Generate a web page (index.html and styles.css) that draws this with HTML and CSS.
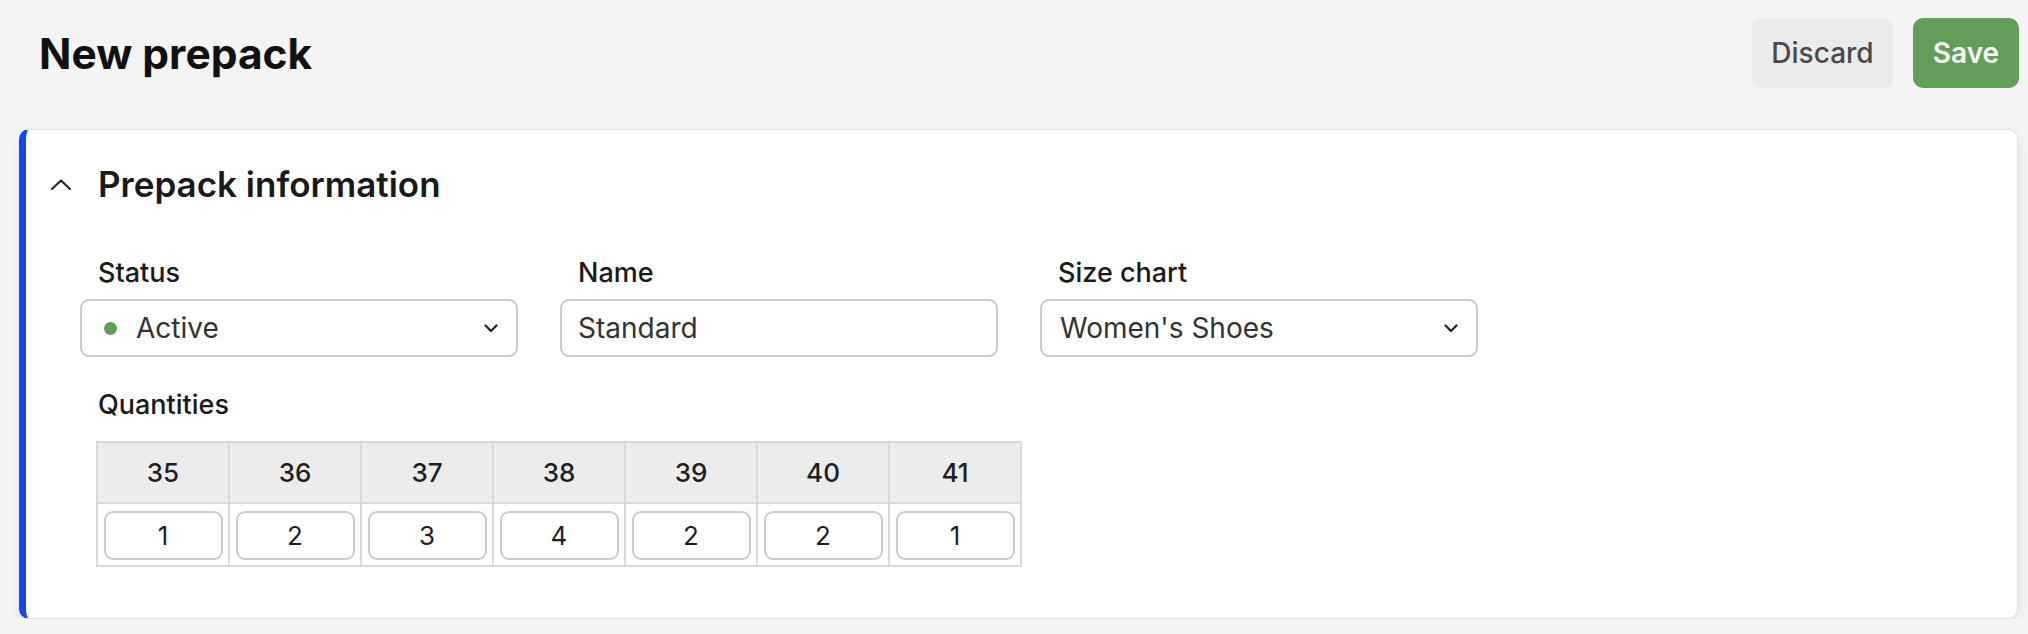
FILE: index.html
```html
<!DOCTYPE html>
<html lang="en">
<head>
  <meta charset="UTF-8">
  <meta name="viewport" content="width=device-width, initial-scale=1.0">
  <title>New prepack</title>
  <link rel="stylesheet" href="styles.css">
</head>
<body>
  <div class="page">
    <div class="topbar">
      <h1>New prepack</h1>
      <div class="actions">
        <button class="btn btn-discard">Discard</button>
        <button class="btn btn-save">Save</button>
      </div>
    </div>

    <div class="card">
      <div class="card-header">
        <svg class="collapse" width="20" height="11" viewBox="0 0 20 11">
          <path d="M1 10 L10 1.5 L19 10" fill="none" stroke="#1f1f1f" stroke-width="2" stroke-linecap="round" stroke-linejoin="round"/>
        </svg>
        <h2>Prepack information</h2>
      </div>

      <div class="card-body">
        <div class="fields">
          <div class="field">
            <label>Status</label>
            <div class="select">
              <span class="dot"></span>
              <span class="select-value">Active</span>
              <svg class="caret" width="14" height="9" viewBox="0 0 14 9">
                <path d="M1.5 1.5 L7 7 L12.5 1.5" fill="none" stroke="#222" stroke-width="2.2" stroke-linecap="round" stroke-linejoin="round"/>
              </svg>
            </div>
          </div>
          <div class="field">
            <label for="prepackName">Name</label>
            <input type="text" id="prepackName" class="text-input" value="Standard">
          </div>
          <div class="field">
            <label>Size chart</label>
            <div class="select">
              <span class="select-value">Women's Shoes</span>
              <svg class="caret" width="14" height="9" viewBox="0 0 14 9">
                <path d="M1.5 1.5 L7 7 L12.5 1.5" fill="none" stroke="#222" stroke-width="2.2" stroke-linecap="round" stroke-linejoin="round"/>
              </svg>
            </div>
          </div>
        </div>

        <div class="quantities">
          <label>Quantities</label>
          <table class="qty-table">
            <tr>
              <th>35</th><th>36</th><th>37</th><th>38</th><th>39</th><th>40</th><th>41</th>
            </tr>
            <tr>
              <td><input type="text" value="1"></td>
              <td><input type="text" value="2"></td>
              <td><input type="text" value="3"></td>
              <td><input type="text" value="4"></td>
              <td><input type="text" value="2"></td>
              <td><input type="text" value="2"></td>
              <td><input type="text" value="1"></td>
            </tr>
          </table>
        </div>
      </div>
    </div>
  </div>
</body>
</html>
```

FILE: styles.css
```css
body {
  margin: 0;
  background-color: #f4f4f4;
  font-family: 'Inter', 'Noto Sans', sans-serif;
  color: #1a1a1a;
}
.page {
  padding: 18px 10px 0 19px;
}
.topbar {
  display: flex;
  justify-content: space-between;
  align-items: center;
  height: 70px;
  padding-left: 20px;
  margin-bottom: 41px;
}
h1 {
  margin: 0;
  font-size: 42.5px;
  font-weight: 700;
  color: #111;
}
.actions {
  display: flex;
  gap: 20px;
  margin-right: -1px;
}
.btn {
  height: 70px;
  border: none;
  border-radius: 10px;
  font-family: inherit;
  font-size: 28px;
  font-weight: 500;
  cursor: pointer;
}
.btn-discard {
  width: 141px;
  background-color: #ebebeb;
  color: #4a4a4a;
}
.btn-save {
  width: 106px;
  background-color: #629d5a;
  color: white;
  font-weight: 600;
}
.card {
  background: white;
  border: 1px solid #e3e3e3;
  border-left: 7px solid #1549ec;
  border-radius: 10px;
  box-shadow: 0 6px 14px rgba(0, 0, 0, 0.07);
  padding: 32px 0 51px 0;
}
.card-header {
  display: flex;
  align-items: center;
  padding-left: 25px;
}
.collapse {
  margin-right: 27px;
}
h2 {
  margin: 0;
  font-size: 35px;
  line-height: 44px;
  font-weight: 600;
  color: #1a1a1a;
}
.card-body {
  padding-left: 54px;
}
.fields {
  display: flex;
  gap: 42px;
  margin-top: 51px;
}
.field {
  width: 438px;
}
label {
  display: block;
  padding-left: 18px;
  font-size: 27px;
  line-height: 32px;
  font-weight: 500;
  color: #1a1a1a;
  margin-bottom: 10px;
}
.select,
.text-input {
  box-sizing: border-box;
  width: 100%;
  height: 58px;
  border: 2px solid #cbcbcb;
  border-radius: 9px;
  background: white;
  font-family: inherit;
  font-size: 28px;
  color: #333;
}
.select {
  display: flex;
  align-items: center;
  padding: 0 18px 0 18px;
}
.select-value {
  flex: 1;
}
.dot {
  width: 13px;
  height: 13px;
  border-radius: 50%;
  background-color: #629d5a;
  margin: 0 19px 0 4px;
}
.text-input {
  padding: 0 16px;
  outline: none;
}
.quantities {
  margin-top: 32px;
}
.quantities label {
  margin-bottom: 20px;
}
.qty-table {
  margin-left: 16px;
  border-collapse: collapse;
}
.qty-table th,
.qty-table td {
  border: 2px solid #dadada;
  width: 130px;
  text-align: center;
  padding: 0;
}
.qty-table th {
  height: 59px;
  background-color: #ececec;
  font-size: 26px;
  font-weight: 500;
  color: #1f1f1f;
}
.qty-table td {
  height: 61px;
}
.qty-table input {
  box-sizing: border-box;
  width: 119px;
  height: 49px;
  margin: 2px 0 0 0;
  border: 2px solid #cbcbcb;
  border-radius: 9px;
  text-align: center;
  font-family: inherit;
  font-size: 26px;
  color: #1f1f1f;
  outline: none;
  vertical-align: middle;
}
```
